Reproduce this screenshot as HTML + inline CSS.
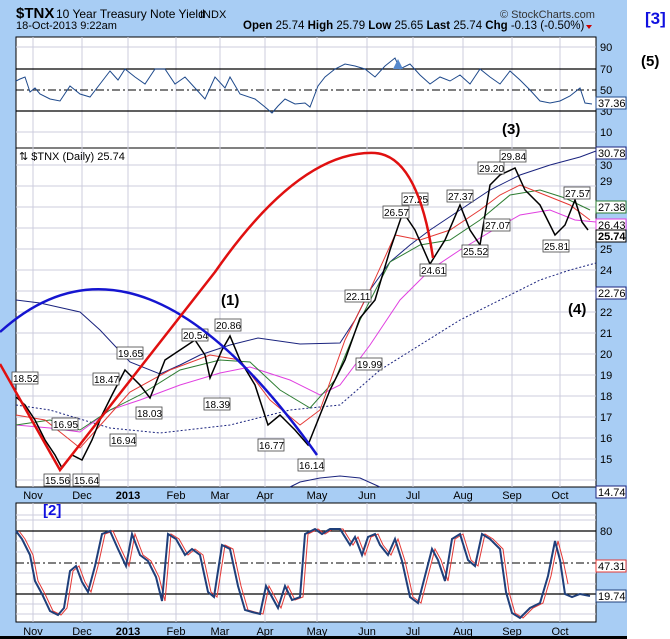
<!DOCTYPE html>
<html><head><meta charset="utf-8"><style>
html,body{margin:0;padding:0;background:#fff;width:670px;height:639px;overflow:hidden}
svg{display:block;font-family:"Liberation Sans",sans-serif}
</style></head><body>
<svg width="670" height="639" viewBox="0 0 670 639" xmlns="http://www.w3.org/2000/svg">
<rect x="0" y="0" width="627" height="637" fill="#a8cdf4"/>
<rect x="0" y="636" width="627" height="3" fill="#000"/>
<text x="16" y="18" font-size="15" font-weight="bold">$TNX</text>
<text x="56" y="18" font-size="12">10 Year Treasury Note Yield</text>
<text x="200" y="18" font-size="11">INDX</text>
<text x="500" y="18" font-size="11" fill="#333">© StockCharts.com</text>
<text x="16" y="29" font-size="11">18-Oct-2013 9:22am</text>
<text x="243" y="29" font-size="11.5"><tspan font-weight="bold">Open</tspan> 25.74 <tspan font-weight="bold">High</tspan> 25.79 <tspan font-weight="bold">Low</tspan> 25.65 <tspan font-weight="bold">Last</tspan> 25.74 <tspan font-weight="bold">Chg</tspan> -0.13 (-0.50%)</text>
<path d="M586 25 l6 0 l-3 4z" fill="#c00"/>
<rect x="16" y="37" width="580" height="111" fill="#fff" stroke="#000"/>
<rect x="16" y="148" width="580" height="339" fill="#fff" stroke="#000"/>
<rect x="16" y="503" width="580" height="119" fill="#fff" stroke="#000"/>
<g stroke="#ccd" stroke-width="1">
<path d="M33 37V148M82 37V148M128 37V148M176 37V148M220 37V148M265 37V148M317 37V148M367 37V148M413 37V148M463 37V148M512 37V148M560 37V148"/>
<path d="M33 148V487M82 148V487M128 148V487M176 148V487M220 148V487M265 148V487M317 148V487M367 148V487M413 148V487M463 148V487M512 148V487M560 148V487"/>
<path d="M33 503V622M82 503V622M128 503V622M176 503V622M220 503V622M265 503V622M317 503V622M367 503V622M413 503V622M463 503V622M512 503V622M560 503V622"/>
<path d="M16 47H596M16 132H596M16 165H596M16 186H596M16 207H596M16 228H596M16 249H596M16 270H596M16 291H596M16 312H596M16 333H596M16 354H596M16 375H596M16 396H596M16 417H596M16 438H596M16 459H596M16 480H596"/>
<path d="M16 515H596M16 520H596M16 541H596M16 552H596M16 573H596M16 584H596M16 604H596M16 614H596"/>
</g>
<path d="M16 69H596M16 111H596M16 594H596M16 531H596" stroke="#000" stroke-width="1.3"/>
<path d="M16 90H596M16 563H596" stroke="#000" stroke-dasharray="8,3,2,3"/>
<polyline fill="none" stroke="#1f4a8c" stroke-width="1" points="16,81 20,79 25,77 30,92 35,88 40,94 50,99 60,101 70,86 80,94 90,97 100,84 110,71 118,80 125,69 135,77 145,84 155,69 165,69 175,84 185,77 195,88 205,99 215,77 225,88 230,77 240,94 255,99 265,107 272,113 278,106 285,99 295,104 305,103 310,107 318,86 325,77 335,69 345,64 355,66 365,69 375,77 385,66 395,58 400,69 410,64 420,75 430,84 440,77 450,81 460,75 470,84 480,69 490,77 500,84 510,71 520,80 530,90 540,101 550,103 560,101 570,96 580,88 585,103 592,104"/>
<path d="M393 69 L398 59 L403 69Z" fill="#5588cc"/>
<text x="600" y="51" font-size="11">90</text><text x="600" y="73" font-size="11">70</text><text x="600" y="94" font-size="11">50</text><text x="600" y="115" font-size="11">30</text><text x="600" y="136" font-size="11">10</text>
<rect x="596" y="97" width="30" height="12" fill="#fff" stroke="#1f4a8c"/><text x="598" y="107" font-size="11">37.36</text>
<text x="502" y="134" font-size="15" font-weight="bold">(3)</text>
<text x="19" y="160" font-size="11">⇅ $TNX (Daily) 25.74</text>
<polyline fill="none" stroke="#1a237e" points="16,300 40,303 80,312 100,330 130,362 160,374 180,365 200,355 230,345 258,338 300,344 340,343 355,320 370,290 390,262 410,245 430,230 460,210 490,190 520,175 550,165 580,157 596,151"/>
<polyline fill="none" stroke="#1a237e" points="290,487 300,482 320,478 340,476 360,478 380,487"/>
<polyline fill="none" stroke="#1a237e" stroke-dasharray="2,2" points="16,405 50,410 110,428 160,433 230,425 290,410 340,405 380,370 420,345 460,320 500,300 540,280 570,270 596,263"/>
<polyline fill="none" stroke="#e040e0" points="16,425 50,428 80,432 110,410 140,400 180,385 220,373 250,367 290,380 320,395 340,385 370,345 400,300 430,270 460,250 490,232 520,215 550,210 575,220 596,222"/>
<polyline fill="none" stroke="#2e7d32" points="16,425 50,420 80,430 110,410 140,395 180,370 220,360 250,362 280,390 310,408 335,380 360,320 390,262 420,245 450,240 480,220 510,195 540,190 565,198 590,210"/>
<polyline fill="none" stroke="#e53935" points="16,415 45,420 80,448 105,420 130,392 170,370 210,355 240,360 270,400 300,425 320,410 345,340 370,290 395,235 420,240 450,230 480,210 500,195 520,185 545,195 570,205 590,220"/>
<polyline fill="none" stroke="#000" stroke-width="1.5" points="16,397 25,405 35,420 45,440 55,455 62,468 72,455 82,460 92,440 102,415 112,395 125,370 140,385 150,398 165,360 180,350 195,340 205,355 210,378 222,350 230,336 240,360 255,385 268,425 280,415 295,430 308,445 318,420 330,390 345,360 360,318 375,300 390,250 403,212 415,230 430,264 445,240 460,205 470,230 480,245 490,185 500,175 515,168 525,190 540,205 555,235 565,225 575,200 582,222 588,230"/>
<g font-size="10">
<g fill="#fff" stroke="#444" stroke-width="0.8">
<rect x="12" y="372" width="26" height="12"/><rect x="52" y="418" width="26" height="12"/><rect x="44" y="474" width="26" height="12"/><rect x="73" y="474" width="26" height="12"/>
<rect x="93" y="373" width="26" height="12"/><rect x="117" y="347" width="26" height="12"/><rect x="136" y="407" width="26" height="12"/><rect x="110" y="434" width="26" height="12"/>
<rect x="182" y="329" width="26" height="12"/><rect x="215" y="319" width="26" height="12"/><rect x="204" y="398" width="26" height="12"/><rect x="258" y="439" width="26" height="12"/><rect x="298" y="459" width="26" height="12"/>
<rect x="345" y="290" width="26" height="12"/><rect x="356" y="358" width="26" height="12"/><rect x="402" y="193" width="26" height="12"/><rect x="383" y="206" width="26" height="12"/><rect x="420" y="264" width="26" height="12"/>
<rect x="447" y="190" width="26" height="12"/><rect x="478" y="162" width="26" height="12"/><rect x="500" y="150" width="26" height="12"/><rect x="484" y="219" width="26" height="12"/><rect x="462" y="245" width="26" height="12"/>
<rect x="564" y="187" width="26" height="12"/><rect x="543" y="240" width="26" height="12"/>
</g>
<text x="13" y="382">18.52</text><text x="53" y="428">16.95</text><text x="45" y="484">15.56</text><text x="74" y="484">15.64</text>
<text x="94" y="383">18.47</text><text x="118" y="357">19.65</text><text x="137" y="417">18.03</text><text x="111" y="444">16.94</text>
<text x="183" y="339">20.54</text><text x="216" y="329">20.86</text><text x="205" y="408">18.39</text><text x="259" y="449">16.77</text><text x="299" y="469">16.14</text>
<text x="346" y="300">22.11</text><text x="357" y="368">19.99</text><text x="403" y="203">27.25</text><text x="384" y="216">26.57</text><text x="421" y="274">24.61</text>
<text x="448" y="200">27.37</text><text x="479" y="172">29.20</text><text x="501" y="160">29.84</text><text x="485" y="229">27.07</text><text x="463" y="255">25.52</text>
<text x="565" y="197">27.57</text><text x="544" y="250">25.81</text>
</g>
<path d="M0 332 Q140 205 317 455" fill="none" stroke="#1515d0" stroke-width="2.5"/>
<path d="M0 364 L60 470 L215 272 Q300 150 375 153 Q418 156 433 258" fill="none" stroke="#e01010" stroke-width="2.5"/>
<text x="221" y="305" font-size="15" font-weight="bold">(1)</text>
<text x="568" y="314" font-size="15" font-weight="bold">(4)</text>
<g font-size="11">
<text x="600" y="169">30</text><text x="600" y="185">29</text><text x="600" y="253">25</text><text x="600" y="274">24</text><text x="600" y="316">22</text><text x="600" y="337">21</text><text x="600" y="358">20</text><text x="600" y="379">19</text><text x="600" y="400">18</text><text x="600" y="421">17</text><text x="600" y="442">16</text><text x="600" y="463">15</text>
</g>
<g font-size="11" fill="#000">
<rect x="596" y="147" width="30" height="12" fill="#fff" stroke="#1a237e"/><text x="598" y="157">30.78</text>
<rect x="596" y="201" width="30" height="12" fill="#fff" stroke="#2e7d32"/><text x="598" y="211">27.38</text>
<rect x="596" y="219" width="30" height="12" fill="#fff" stroke="#e040e0"/><text x="598" y="229">26.43</text>
<rect x="596" y="230" width="30" height="12" fill="#fff" stroke="#000"/><text x="598" y="240" font-weight="bold">25.74</text>
<rect x="596" y="287" width="30" height="12" fill="#fff" stroke="#1a237e"/><text x="598" y="297">22.76</text>
<rect x="596" y="486" width="30" height="12" fill="#fff" stroke="#1a237e"/><text x="598" y="496">14.74</text>
</g>
<g font-size="11" text-anchor="middle">
<text x="33" y="499">Nov</text><text x="82" y="499">Dec</text><text x="128" y="499" font-weight="bold">2013</text><text x="176" y="499">Feb</text><text x="220" y="499">Mar</text><text x="265" y="499">Apr</text><text x="317" y="499">May</text><text x="367" y="499">Jun</text><text x="413" y="499">Jul</text><text x="463" y="499">Aug</text><text x="512" y="499">Sep</text><text x="560" y="499">Oct</text>
<text x="33" y="635">Nov</text><text x="82" y="635">Dec</text><text x="128" y="635" font-weight="bold">2013</text><text x="176" y="635">Feb</text><text x="220" y="635">Mar</text><text x="265" y="635">Apr</text><text x="317" y="635">May</text><text x="367" y="635">Jun</text><text x="413" y="635">Jul</text><text x="463" y="635">Aug</text><text x="512" y="635">Sep</text><text x="560" y="635">Oct</text>
</g>
<text x="43" y="515" font-size="15" font-weight="bold" fill="#1010e0">[2]</text>
<polyline fill="none" stroke="#e53935" stroke-width="1" points="19,531 25,539 33,555 38,581 45,594 53,611 61,615 67,608 73,571 79,566 85,582 91,592 98,566 105,534 113,531 121,549 129,566 135,534 143,555 151,561 159,577 165,601 171,534 179,539 188,555 195,549 203,555 211,592 217,597 225,545 233,549 241,586 248,610 255,612 263,614 269,586 275,597 281,608 288,586 295,600 303,597 308,534 318,529 325,534 333,529 343,529 353,545 358,537 365,555 371,537 378,534 383,545 391,555 398,539 405,561 413,597 421,603 428,576 435,549 441,560 448,581 455,539 463,534 471,560 478,566 485,534 493,539 503,549 509,592 515,613 523,618 533,608 543,603 551,576 558,541 563,560 568,584"/>
<polyline fill="none" stroke="#1f3f7a" stroke-width="2" points="16,531 22,539 30,555 35,581 42,594 50,611 58,615 64,608 70,571 76,566 82,582 88,592 95,566 102,534 110,531 118,549 126,566 132,534 140,555 148,561 156,577 162,601 168,534 176,539 185,555 192,549 200,555 208,592 214,597 222,545 230,549 238,586 245,610 252,612 260,614 266,586 272,597 278,608 285,586 292,600 300,597 305,534 315,529 322,534 330,529 340,529 350,545 355,537 362,555 368,537 375,534 380,545 388,555 395,539 402,561 410,597 418,603 425,576 432,549 438,560 445,581 452,539 460,534 468,560 475,566 482,534 490,539 500,549 506,592 512,613 520,618 530,608 540,603 548,576 555,541 560,560 565,594 572,597 580,594 590,596"/>
<text x="600" y="535" font-size="11">80</text>
<rect x="596" y="560" width="30" height="12" fill="#fff" stroke="#e53935"/><text x="598" y="570" font-size="11">47.31</text>
<rect x="596" y="590" width="30" height="12" fill="#fff" stroke="#1f3f7a"/><text x="598" y="600" font-size="11">19.74</text>
<text x="645" y="24" font-size="17" font-weight="bold" fill="#1010e0">[3]</text>
<text x="641" y="66" font-size="15" font-weight="bold">(5)</text>
</svg>
</body></html>
